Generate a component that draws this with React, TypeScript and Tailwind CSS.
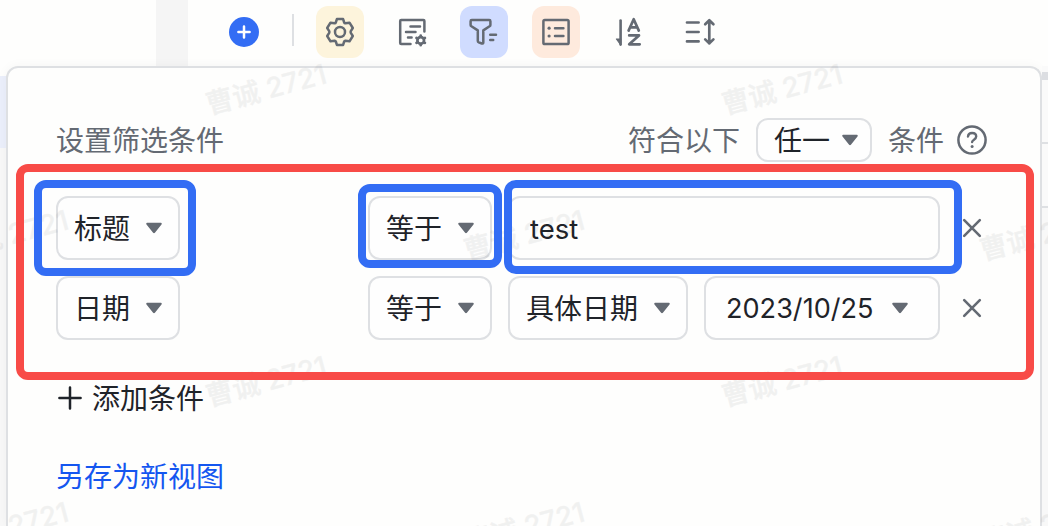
import type { ReactNode } from "react";

const ICON = "#646a73";

function Caret() {
  return (
    <svg width="16" height="12" viewBox="0 0 16 12" fill={ICON} className="shrink-0">
      <path d="M1.2 0.8h13.6c.9 0 1.3.9.7 1.6L8.9 10.8c-.5.6-1.3.6-1.8 0L.5 2.4C-.1 1.7.3.8 1.2.8Z" />
    </svg>
  );
}

function Select({ label, className }: { label: string; className: string }) {
  return (
    <button
      className={`flex shrink-0 items-center rounded-xl border-2 border-[#dee0e3] bg-white/40 pl-4 text-left whitespace-nowrap ${className}`}
    >
      <span className="pt-0.5">{label}</span>
      <Caret />
    </button>
  );
}

function RemoveButton() {
  return (
    <button aria-label="删除" className="ml-[22px] shrink-0">
      <svg width="20" height="20" viewBox="0 0 20 20" stroke={ICON} strokeWidth="2.6" strokeLinecap="round">
        <path d="M2.2 2.2l15.6 15.6M17.8 2.2L2.2 17.8" />
      </svg>
    </button>
  );
}

function ToolButton({ className = "", children }: { className?: string; children: ReactNode }) {
  return (
    <button className={`flex h-[52px] w-12 items-center justify-center rounded-xl ${className}`}>
      <svg
        width="32"
        height="32"
        viewBox="0 0 32 32"
        fill="none"
        stroke={ICON}
        strokeWidth="2.5"
        strokeLinecap="round"
        strokeLinejoin="round"
      >
        {children}
      </svg>
    </button>
  );
}

function Toolbar() {
  return (
    <header className="flex h-[66px] shrink-0 items-start">
      <div className="ml-[156px] h-full w-8 bg-[#f5f5f5]" />
      <button aria-label="新增" className="mt-[17px] ml-[41px]">
        <svg width="30" height="30" viewBox="0 0 30 30">
          <circle cx="15" cy="15" r="15" fill="#336df4" />
          <path d="M15 9.4v11.2M9.4 15h11.2" stroke="#fff" strokeWidth="2.5" strokeLinecap="round" />
        </svg>
      </button>
      <div className="mt-3.5 ml-[33px] h-8 w-0.5 bg-[#dee0e3]" />
      <div className="mt-1.5 ml-[22px] flex gap-6">
        <ToolButton className="bg-[#fdf4dc]">
          <path d="M12.9 3.1h6.2l1.1 3.4q.3.8 1.2.7l4.1-.5 3.3 5.3-2 3.1q-.4.9 0 1.8l2 3.1-3.3 5.3-4.1-.5q-.9-.1-1.2.7l-1.1 3.4h-6.2l-1.1-3.4q-.3-.8-1.2-.7l-4.1.5-3.3-5.3 2-3.1q.4-.9 0-1.8l-2-3.1 3.3-5.3 4.1.5q.9.1 1.2-.7z" />
          <circle cx="16" cy="16" r="5" />
        </ToolButton>
        <ToolButton>
          <path d="M14.5 28H5.2a1 1 0 0 1-1-1V5a1 1 0 0 1 1-1h22.2a1 1 0 0 1 1 1v10.5M14.5 10.6h9.5M10 16h9.5M12 21.4h3.6" />
          <circle cx="24.7" cy="24.4" r="3.3" strokeWidth="2.7" />
          <path
            d="M24.7 19.6v.8M24.7 28.4v.8M20.5 22l.7.4M28.2 26.4l.7.4M20.5 26.8l.7-.4M28.2 22.4l.7-.4"
            strokeWidth="2.7"
          />
        </ToolButton>
        <ToolButton className="bg-[#d0dcff]">
          <path d="M3.8 4.1h17.4a1.2 1.2 0 0 1 1.2 1.2v3.6c0 .7-.3 1.1-.8 1.4l-6.3 4.1v12c0 .9-.7 1.4-1.5 1.1l-3-1.2c-.6-.3-1-.7-1-1.3V14.4l-6.4-4.1c-.5-.3-.8-.7-.8-1.4V5.3c0-.7.5-1.2 1.2-1.2Z" />
          <path d="M22.2 18.7h5.8M22.2 24.1h3" />
        </ToolButton>
        <ToolButton className="bg-[#feeadd]">
          <rect x="3.4" y="4.1" width="25.2" height="24" rx="1.4" />
          <path d="M15 12.2h8.4M15 20h8.4" />
          <circle cx="9.1" cy="12.2" r="1.6" fill={ICON} stroke="none" />
          <circle cx="9.1" cy="20" r="1.6" fill={ICON} stroke="none" />
        </ToolButton>
        <ToolButton>
          <path d="M8.6 4.6v24" strokeWidth="2.6" />
          <path d="M4.4 23h4.2v5.6z" fill={ICON} strokeWidth="1.2" />
          <path d="M16.6 14.6L21.7 3.2l5.1 11.4M18.3 11.3h6.8M17.2 19.4h9.8L17.2 28.3h10.5" strokeWidth="2.7" />
        </ToolButton>
        <ToolButton>
          <path d="M3 6.5h11.6M3 16h11.6M3 25.4h11.6M25.3 4.5v23M21.2 8.2l4.1-4 4.1 4M21.2 23.4l4.1 4 4.1-4" strokeWidth="2.7" />
        </ToolButton>
      </div>
    </header>
  );
}

function Watermark({ className }: { className: string }) {
  return (
    <span
      className={`absolute -translate-x-1/2 -translate-y-1/2 -rotate-15 text-[27.5px] leading-8 font-medium whitespace-nowrap text-[#1f2329] opacity-[0.055] [-webkit-text-stroke:0.5px_#1f2329] ${className}`}
    >
      曹诚 2721
    </span>
  );
}

export default function App() {
  return (
    <div className="relative flex h-[526px] w-[1048px] flex-col overflow-hidden bg-[#fefefd] font-[Inter,'Noto_Sans_CJK_SC',sans-serif] text-[28px] leading-10 text-[#1f2329]">
      <Toolbar />
      <div className="flex min-h-0 flex-1">
        <aside className="flex w-1.5 shrink-0 flex-col">
          <div className="mt-2.5 h-[72px] bg-[#ebeffb]" />
          <div className="flex-1 bg-[#f8f8f8]" />
        </aside>
        <main className="flex w-[1036px] shrink-0 flex-col rounded-t-xl border-2 border-b-0 border-[#dee0e3] bg-[#fefefd] pl-12 shadow-[0_0_12px_rgba(31,35,41,0.04)]">
          <div className="mt-[50px] flex h-11 items-center text-[#646a73]">
            <h1 className="w-[572px] shrink-0 pt-0.5">设置筛选条件</h1>
            <span className="w-32 shrink-0 pt-0.5">符合以下</span>
            <Select label="任一" className="h-11 w-[116px] gap-3 text-[#1f2329]" />
            <span className="ml-4 pt-0.5">条件</span>
            <svg className="ml-3" width="32" height="32" viewBox="0 0 32 32" fill="none" stroke={ICON} strokeWidth="2.5" strokeLinecap="round">
              <circle cx="16" cy="16" r="13.6" />
              <path d="M12 12.5c.2-2.2 1.8-3.5 4.1-3.5 2.4 0 4.1 1.4 4.1 3.5 0 3.2-4.1 3-4.1 5.6" strokeWidth="2.4" />
              <circle cx="16.1" cy="22.6" r="1.5" fill={ICON} stroke="none" />
            </svg>
          </div>
          <div className="mt-[34px] flex h-16 items-center">
            <Select label="标题" className="h-16 w-[124px] gap-4" />
            <Select label="等于" className="ml-[188px] h-16 w-[124px] gap-4" />
            <input
              defaultValue="test"
              className="ml-4 h-16 w-[432px] shrink-0 rounded-xl border-2 border-[#dee0e3] bg-transparent px-5 pt-0.5 text-[27.5px]"
            />
            <RemoveButton />
          </div>
          <div className="mt-4 flex h-16 items-center">
            <Select label="日期" className="h-16 w-[124px] gap-4" />
            <Select label="等于" className="ml-[188px] h-16 w-[124px] gap-4" />
            <Select label="具体日期" className="ml-4 h-16 w-[180px] gap-4" />
            <Select label="2023/10/25" className="ml-4 h-16 w-[236px] gap-[18px] !pl-5 text-[27.1px]" />
            <RemoveButton />
          </div>
          <button className="mt-[38px] ml-px flex h-10 items-center gap-[9px] self-start">
            <svg width="26" height="26" viewBox="0 0 26 26" stroke="#1f2329" strokeWidth="2.5" strokeLinecap="round">
              <path d="M13 2.4v21.2M2.4 13h21.2" />
            </svg>
            <span className="pt-0.5">添加条件</span>
          </button>
          <a className="mt-[39px] h-10 self-start text-[#1456f0]">另存为新视图</a>
        </main>
        <aside className="flex flex-1 flex-col bg-[#fafafa]">
          <div className="mt-1.5 h-2 bg-[#dcdee2]" />
          <div className="h-16 border-b-2 border-[#dee0e3]" />
          <div className="h-16 border-b-2 border-[#dee0e3]" />
          <div className="flex-1 bg-[#f8f8f8]" />
        </aside>
      </div>

      <div className="pointer-events-none absolute inset-0">
        <Watermark className="top-[89px] left-[266px]" />
        <Watermark className="top-[89px] left-[782px]" />
        <Watermark className="top-[235px] left-[8px]" />
        <Watermark className="top-[235px] left-[524px]" />
        <Watermark className="top-[235px] left-[1040px]" />
        <Watermark className="top-[381px] left-[266px]" />
        <Watermark className="top-[381px] left-[782px]" />
        <Watermark className="top-[527px] left-[8px]" />
        <Watermark className="top-[527px] left-[524px]" />
        <Watermark className="top-[527px] left-[1040px]" />
        <div className="absolute top-[164px] left-4 h-[216px] w-[1018px] rounded-xl border-8 border-[#f84b47]" />
        <div className="absolute top-[180px] left-[34px] h-24 w-[162px] rounded-xl border-8 border-[#336df4]" />
        <div className="absolute top-[184px] left-[358px] h-[84px] w-36 rounded-xl border-8 border-[#336df4]" />
        <div className="absolute top-[180px] left-[504px] h-[94px] w-[458px] rounded-xl border-8 border-[#336df4]" />
      </div>
    </div>
  );
}
